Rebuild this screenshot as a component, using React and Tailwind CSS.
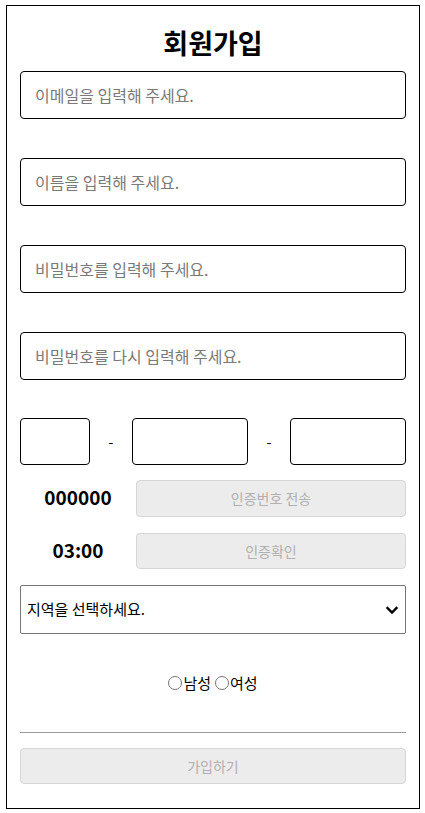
import React from 'react';

const font = { fontFamily: '"Noto Sans CJK KR", "Noto Sans", sans-serif' };

const TextField = ({ placeholder, type = 'text' }) => (
    <input
        type={type}
        placeholder={placeholder}
        className="block w-full h-[48px] mb-[39px] px-[14px] border border-black rounded-[4px] text-[16px] text-black placeholder:text-[#7a7a7a] outline-none"
    />
);

const PhoneBox = ({ width }) => (
    <input
        type="text"
        className={`h-[47px] ${width} border border-black rounded-[4px] text-[15px] outline-none px-2`}
    />
);

export default function App() {
    return (
        <div className="bg-white min-h-[813px] pt-[5px]" style={font}>
            <div className="ml-[6px] w-[414px] h-[804px] border border-black px-[13px] pt-[20px]">
                <h1 className="text-center text-[27px] leading-[34px] font-bold text-black mb-[11px]">회원가입</h1>

                <TextField placeholder="이메일을 입력해 주세요." />
                <TextField placeholder="이름을 입력해 주세요." />
                <TextField type="password" placeholder="비밀번호를 입력해 주세요." />
                <div className="-mb-[1px]">
                    <TextField type="password" placeholder="비밀번호를 다시 입력해 주세요." />
                </div>

                {/* phone */}
                <div className="flex items-center">
                    <PhoneBox width="w-[70px]" />
                    <span className="w-[42px] text-center text-[14px] text-black">-</span>
                    <PhoneBox width="w-[116px]" />
                    <span className="w-[42px] text-center text-[14px] text-black">-</span>
                    <PhoneBox width="w-[116px]" />
                </div>

                <div className="flex items-center mt-[15px]">
                    <div className="w-[116px] text-center text-[19px] font-bold text-black leading-[24px] -mt-[3px]">000000</div>
                    <button disabled className="flex-1 h-[37px] bg-[#ececec] border border-[#d6d6d6] rounded-[4px] text-[14px] text-[#b0b0b0]">
                        인증번호 전송
                    </button>
                </div>

                <div className="flex items-center mt-[16px]">
                    <div className="w-[116px] text-center text-[19px] font-bold text-black leading-[24px] -mt-[3px]">03:00</div>
                    <button disabled className="flex-1 h-[36px] bg-[#ececec] border border-[#d6d6d6] rounded-[4px] text-[14px] text-[#b0b0b0]">
                        인증확인
                    </button>
                </div>

                {/* region select */}
                <div className="mt-[16px] h-[49px] flex items-center justify-between border border-[#767676] rounded-[2px] pl-[6px] pr-[6px]">
                    <span className="text-[15px] text-black">지역을 선택하세요.</span>
                    <svg width="14" height="14" viewBox="0 0 14 14" fill="none">
                        <path d="M2.5 5 L7 9.5 L11.5 5" stroke="black" strokeWidth="2.4" strokeLinecap="square" />
                    </svg>
                </div>

                <div className="mt-[37px] h-[24px] flex items-center justify-center text-[15px] text-black">
                    <label className="flex items-center">
                        <input type="radio" name="gender" className="w-[14px] h-[14px] mr-[1px]" />
                        <span>남성</span>
                    </label>
                    <label className="flex items-center ml-[4px]">
                        <input type="radio" name="gender" className="w-[14px] h-[14px] mr-[1px]" />
                        <span>여성</span>
                    </label>
                </div>

                <div className="mt-[37px] border-t border-[#9a9a9a]" />

                <button disabled className="mt-[15px] w-full h-[36px] bg-[#ececec] border border-[#d6d6d6] rounded-[4px] text-[14px] text-[#b0b0b0]">
                    가입하기
                </button>
            </div>
        </div>
    );
}
